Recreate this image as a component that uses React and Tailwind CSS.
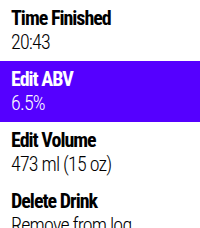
import React from 'react';

const items = [
  { title: 'Time Finished', subtitle: '20:43' },
  { title: 'Edit ABV', subtitle: '6.5%', selected: true },
  { title: 'Edit Volume', subtitle: '473 ml (15 oz)' },
  { title: 'Delete Drink', subtitle: 'Remove from log' },
];

const MenuRow = ({ title, subtitle, selected }) => (
  <div
    className={`h-[61px] shrink-0 pl-[11px] pt-[6px] ${selected ? 'bg-[#5500ff] text-white' : 'bg-white text-black'}`}
  >
    <div className="text-[20px] leading-[24px] font-bold tracking-[-1px] whitespace-nowrap">{title}</div>
    <div className="text-[20px] leading-[24px] font-light tracking-[-0.8px] whitespace-nowrap">{subtitle}</div>
  </div>
);

export default function App() {
  return (
    <div className="w-[200px] h-[228px] overflow-hidden bg-white flex flex-col font-['Roboto_Condensed',Roboto,sans-serif]">
      {items.map((item) => (
        <MenuRow key={item.title} {...item} />
      ))}
    </div>
  );
}
